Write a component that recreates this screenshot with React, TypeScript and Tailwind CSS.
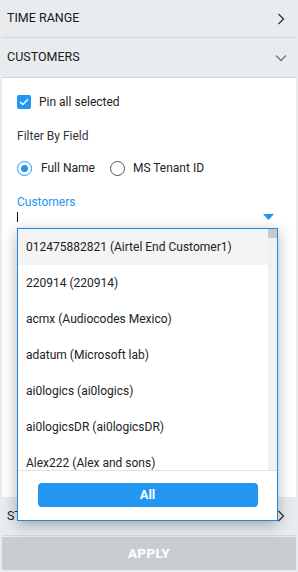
import { useState } from 'react';

const customers = [
  '012475882821 (Airtel End Customer1)',
  '220914 (220914)',
  'acmx (Audiocodes Mexico)',
  'adatum (Microsoft lab)',
  'ai0logics (ai0logics)',
  'ai0logicsDR (ai0logicsDR)',
  'Alex222 (Alex and sons)',
  'alpha (Alpha Systems)',
];

function ChevronRight() {
  return (
    <svg width="8" height="12" viewBox="0 0 8 12" fill="none" stroke="#333" strokeWidth="1.3">
      <path d="M1.5 1 L6.5 6 L1.5 11" />
    </svg>
  );
}

function ChevronDown() {
  return (
    <svg width="12" height="8" viewBox="0 0 12 8" fill="none" stroke="#777" strokeWidth="1.4">
      <path d="M1 1.5 L6 6.5 L11 1.5" />
    </svg>
  );
}

export default function App() {
  const [byName, setByName] = useState(true);

  return (
    <div
      className="relative w-[298px] h-[572px] bg-[#e9ecef] flex flex-col px-[2px] overflow-hidden"
      style={{ fontFamily: 'Roboto, "Liberation Sans", sans-serif' }}
    >
      <div className="h-[38px] flex items-center justify-between pl-[5px] pr-[11px] border-b border-[#d3d7db] shrink-0">
        <span className="text-[12.5px] text-[#1a1a1a]">TIME RANGE</span>
        <ChevronRight />
      </div>
      <div className="h-[40px] flex items-center justify-between pl-[5px] pr-[9px] border-b border-[#d3d7db] shrink-0">
        <span className="text-[12.5px] text-[#1a1a1a]">CUSTOMERS</span>
        <ChevronDown />
      </div>

      <div className="bg-white h-[419px] shrink-0 pl-[15px] pr-[20px] pt-[17px] flex flex-col">
        <label className="flex items-center gap-[8px] h-[14px]">
          <span className="w-[14px] h-[14px] rounded-[2px] bg-[#2196f3] flex items-center justify-center">
            <svg width="10" height="8" viewBox="0 0 10 8" fill="none" stroke="white" strokeWidth="1.4">
              <path d="M1 4 L3.8 6.6 L9 1.2" />
            </svg>
          </span>
          <span className="text-[12px] text-[#222]">Pin all selected</span>
        </label>

        <div className="mt-[20px] text-[12px] text-[#333] leading-[14px]">Filter By Field</div>

        <div className="mt-[17px] flex items-center h-[16px]">
          <button onClick={() => setByName(true)} className="flex items-center gap-[9px]">
            <span
              className={
                byName
                  ? 'w-[15px] h-[15px] rounded-full border-[1.5px] border-[#2196f3] flex items-center justify-center'
                  : 'w-[15px] h-[15px] rounded-full border-[1.5px] border-[#555] flex items-center justify-center'
              }
            >
              {byName && <span className="w-[7px] h-[7px] rounded-full bg-[#2196f3]" />}
            </span>
            <span className="text-[12px] text-[#222]">Full Name</span>
          </button>
          <button onClick={() => setByName(false)} className="flex items-center gap-[8px] ml-[15px]">
            <span
              className={
                !byName
                  ? 'w-[15px] h-[15px] rounded-full border-[1.5px] border-[#2196f3] flex items-center justify-center'
                  : 'w-[15px] h-[15px] rounded-full border-[1.5px] border-[#555] flex items-center justify-center'
              }
            >
              {!byName && <span className="w-[7px] h-[7px] rounded-full bg-[#2196f3]" />}
            </span>
            <span className="text-[12px] text-[#222]">MS Tenant ID</span>
          </button>
        </div>

        <div className="mt-[19px] text-[12px] text-[#2196f3] leading-[14px]">Customers</div>
        <div className="mt-[1px] flex items-center justify-between h-[14px] pr-[2px]">
          <span className="w-px h-[10px] bg-[#111]" />
          <svg width="11" height="6" viewBox="0 0 11 6">
            <path d="M0 0 H11 L5.5 6 Z" fill="#2196f3" />
          </svg>
        </div>
      </div>

      <div className="h-[39px] flex items-center justify-between pl-[5px] pr-[11px] border-b border-[#d3d7db] shrink-0">
        <span className="text-[12.5px] text-[#1a1a1a]">STATUS</span>
        <ChevronRight />
      </div>

      <div className="mt-[1px] h-[33px] bg-[#c8cdd2] flex items-center justify-center shrink-0">
        <span className="text-[13.5px] font-bold text-white tracking-wide">APPLY</span>
      </div>

      <div className="absolute left-[17px] top-[228px] w-[261px] h-[293px] bg-white border border-[#1e88e5] shadow-[0_4px_14px_rgba(0,0,0,0.3)] flex flex-col">
        <div className="h-[241px] flex overflow-hidden shrink-0">
          <div className="flex-1 flex flex-col">
            {customers.map((c, i) => (
              <div
                key={c}
                className={
                  i === 0
                    ? 'h-[36px] shrink-0 flex items-center pl-[8px] bg-[#f4f4f4] text-[12px] text-[#222]'
                    : 'h-[36px] shrink-0 flex items-center pl-[8px] text-[12px] text-[#222]'
                }
              >
                {c}
              </div>
            ))}
          </div>
          <div className="w-[9px] bg-[#f1f1f1] flex flex-col">
            <div className="h-[9px] bg-[#c9c9c9]" />
          </div>
        </div>
        <div className="flex-1 border-t border-[#e2e2e2] flex items-start justify-center pt-[12px]">
          <button className="w-[220px] h-[24px] rounded-[4px] bg-[#2196f3] text-white text-[13px] font-bold">
            All
          </button>
        </div>
      </div>
    </div>
  );
}
